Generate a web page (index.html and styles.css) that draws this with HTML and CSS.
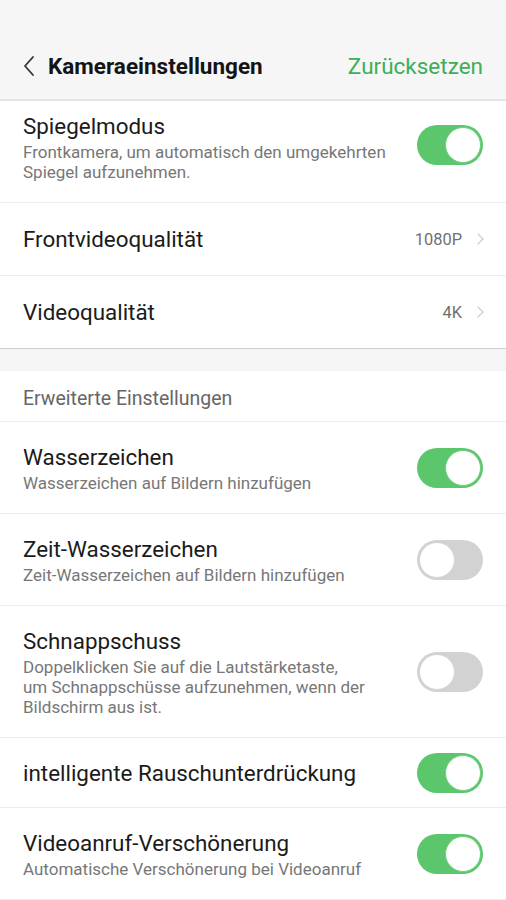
FILE: index.html
```html
<!DOCTYPE html>
<html lang="de">
<head>
    <meta charset="UTF-8">
    <meta name="viewport" content="width=device-width, initial-scale=1.0">
    <title>Kameraeinstellungen</title>
    <link rel="stylesheet" href="styles.css">
</head>
<body>
    <header class="topbar">
        <div class="topbar-left">
            <svg class="back-icon" width="14" height="22" viewBox="0 0 14 22">
                <path d="M11 2 L3 11 L11 20" fill="none" stroke="#333" stroke-width="1.8" stroke-linecap="round" stroke-linejoin="round"/>
            </svg>
            <h1 class="title">Kameraeinstellungen</h1>
        </div>
        <span class="reset">Zurücksetzen</span>
    </header>

    <div class="group">
        <div class="row row-sub first">
            <div class="row-text">
                <div class="row-title">Spiegelmodus</div>
                <div class="row-desc">Frontkamera, um automatisch den umgekehrten<br>Spiegel aufzunehmen.</div>
            </div>
            <span class="switch on"></span>
        </div>
        <div class="row row-plain">
            <div class="row-title">Frontvideoqualität</div>
            <div class="row-value">1080P <span class="chevron"></span></div>
        </div>
        <div class="row row-plain last">
            <div class="row-title">Videoqualität</div>
            <div class="row-value">4K <span class="chevron"></span></div>
        </div>
    </div>

    <div class="gap"></div>

    <div class="group">
        <div class="section-title">Erweiterte Einstellungen</div>
        <div class="row row-sub">
            <div class="row-text">
                <div class="row-title">Wasserzeichen</div>
                <div class="row-desc">Wasserzeichen auf Bildern hinzufügen</div>
            </div>
            <span class="switch on"></span>
        </div>
        <div class="row row-sub">
            <div class="row-text">
                <div class="row-title">Zeit-Wasserzeichen</div>
                <div class="row-desc">Zeit-Wasserzeichen auf Bildern hinzufügen</div>
            </div>
            <span class="switch"></span>
        </div>
        <div class="row row-sub">
            <div class="row-text">
                <div class="row-title">Schnappschuss</div>
                <div class="row-desc">Doppelklicken Sie auf die Lautstärketaste,<br>um Schnappschüsse aufzunehmen, wenn der<br>Bildschirm aus ist.</div>
            </div>
            <span class="switch"></span>
        </div>
        <div class="row row-plain short">
            <div class="row-title">intelligente Rauschunterdrückung</div>
            <span class="switch on"></span>
        </div>
        <div class="row row-sub">
            <div class="row-text">
                <div class="row-title">Videoanruf-Verschönerung</div>
                <div class="row-desc">Automatische Verschönerung bei Videoanruf</div>
            </div>
            <span class="switch on"></span>
        </div>
    </div>
</body>
</html>
```

FILE: styles.css
```css
body {
    margin: 0;
    background-color: #ffffff;
    font-family: Roboto, "Noto Sans", sans-serif;
    color: #1b1b1b;
}
.topbar {
    height: 101px;
    background-color: #f6f6f6;
    border-bottom: 2px solid #e4e4e4;
    box-sizing: border-box;
    display: flex;
    align-items: flex-end;
    justify-content: space-between;
    padding: 0 23px 19px 22px;
}
.topbar-left {
    display: flex;
    align-items: center;
    gap: 12px;
}
.back-icon {
    display: block;
}
.title {
    margin: 0;
    font-size: 22.5px;
    line-height: 28px;
    font-weight: 700;
    color: #141414;
}
.reset {
    font-size: 22.5px;
    line-height: 28px;
    color: #3dae58;
}
.group {
    background-color: #ffffff;
}
.row {
    display: flex;
    align-items: center;
    justify-content: space-between;
    padding: 0 23px;
    border-bottom: 1px solid #ececec;
}
.row-sub {
    padding-top: 21px;
    padding-bottom: 20px;
}
.row-sub.first {
    padding-top: 11px;
}
.row-sub.first .switch {
    margin-top: -4px;
}
.row-plain {
    height: 73px;
    box-sizing: border-box;
}
.row-plain.short {
    height: 70px;
}
.row.last {
    border-bottom: 1px solid #cfcfcf;
}
.row-text {
    flex: 1;
    padding-right: 16px;
}
.row-title {
    font-size: 22.4px;
    line-height: 28px;
}
.row-desc {
    margin-top: 2px;
    font-size: 17px;
    line-height: 20px;
    color: #777777;
}
.row-value {
    display: flex;
    align-items: center;
    gap: 12px;
    font-size: 16.4px;
    color: #707070;
}
.chevron {
    width: 7px;
    height: 7px;
    border-top: 1.5px solid #c4c4c4;
    border-right: 1.5px solid #c4c4c4;
    transform: rotate(45deg);
    margin-right: 1px;
}
.gap {
    height: 22px;
    background-color: #f5f5f5;
}
.section-title {
    height: 44px;
    line-height: 44px;
    padding: 6px 23px 0;
    font-size: 19.5px;
    color: #666666;
    border-bottom: 1px solid #ececec;
}
.switch {
    flex-shrink: 0;
    position: relative;
    width: 66px;
    height: 40px;
    border-radius: 20px;
    background-color: #d2d2d2;
}
.switch::after {
    content: "";
    position: absolute;
    top: 2px;
    left: 2px;
    width: 34px;
    height: 34px;
    border-radius: 50%;
    background-color: #ffffff;
    border: 1px solid #d4d4d4;
}
.switch.on {
    background-color: #5bc66c;
}
.switch.on::after {
    left: auto;
    right: 2px;
    border-color: #6fd07e;
}
```
